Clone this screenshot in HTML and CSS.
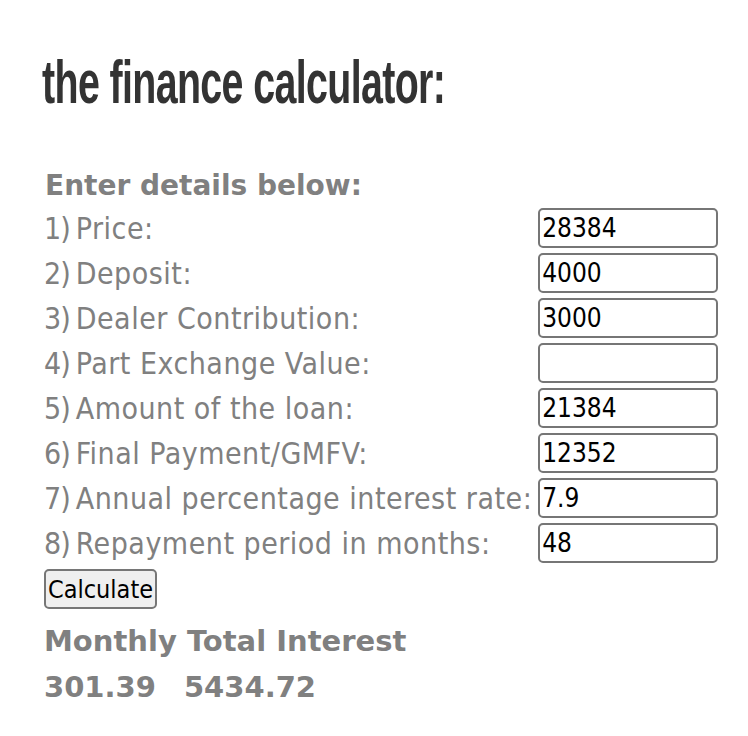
FILE: index.html
```html
<!DOCTYPE html>
<html lang="en">
<head>
  <meta charset="UTF-8">
  <meta name="viewport" content="width=device-width, initial-scale=1.0">
  <title>the finance calculator</title>
  <link rel="stylesheet" href="styles.css">
</head>
<body>
  <div class="container">
    <h1>the finance calculator:</h1>
    <p class="intro">Enter details below:</p>
    <form class="calc" onsubmit="return false">
      <span class="num">1)</span><label for="price">Price:</label><input type="text" id="price" value="28384">
      <span class="num">2)</span><label for="deposit">Deposit:</label><input type="text" id="deposit" value="4000">
      <span class="num">3)</span><label for="dealer">Dealer Contribution:</label><input type="text" id="dealer" value="3000">
      <span class="num">4)</span><label for="px">Part Exchange Value:</label><input type="text" id="px" value="">
      <span class="num">5)</span><label for="loan">Amount of the loan:</label><input type="text" id="loan" value="21384">
      <span class="num">6)</span><label for="final">Final Payment/GMFV:</label><input type="text" id="final" value="12352">
      <span class="num">7)</span><label for="rate">Annual percentage interest rate:</label><input type="text" id="rate" value="7.9">
      <span class="num">8)</span><label for="months">Repayment period in months:</label><input type="text" id="months" value="48">
    </form>
    <button class="calc-btn" type="button">Calculate</button>
    <div class="results">
      <div class="res-head">Monthly Total Interest</div>
      <div class="res-vals"><span class="monthly">301.39</span><span>5434.72</span></div>
    </div>
  </div>
</body>
</html>
```

FILE: styles.css
```css
body {
  margin: 0;
  padding: 0;
  background-color: #fff;
  font-family: 'DejaVu Sans', Verdana, sans-serif;
  color: #808080;
}
.container {
  padding: 46px 0 0 44px;
}
h1 {
  font-family: 'Liberation Sans', Arial, sans-serif;
  font-weight: bold;
  font-size: 62px;
  letter-spacing: -1px;
  line-height: 72px;
  color: #333;
  margin: 0 0 51px -2px;
  white-space: nowrap;
  transform: scaleX(0.635);
  transform-origin: left center;
}
.intro {
  font-weight: bold;
  font-size: 28px;
  line-height: 34px;
  margin: 0 0 5px 1px;
}
.calc {
  display: grid;
  grid-template-columns: auto auto 180px;
  column-gap: 6px;
  row-gap: 5px;
  align-items: center;
  font-family: 'DejaVu Sans Condensed', 'DejaVu Sans', sans-serif;
  font-stretch: condensed;
  font-size: 30px;
  letter-spacing: 0.5px;
  width: max-content;
}
.num {
  letter-spacing: -1px;
}
.calc input {
  box-sizing: border-box;
  height: 40px;
  width: 180px;
  border: 2px solid #767676;
  border-radius: 5px;
  padding: 0 2px;
  font-family: 'DejaVu Sans Condensed', 'DejaVu Sans', sans-serif;
  font-stretch: condensed;
  font-size: 26px;
  letter-spacing: 0;
  color: #000;
}
.calc-btn {
  margin-top: 6px;
  height: 40px;
  padding: 0 2px;
  border: 2px solid #767676;
  border-radius: 5px;
  background-color: #efefef;
  font-family: 'DejaVu Sans Condensed', 'DejaVu Sans', sans-serif;
  font-stretch: condensed;
  font-size: 25px;
  color: #000;
}
.results {
  font-weight: bold;
  font-size: 29px;
  line-height: 46px;
  margin-top: 9px;
}
.monthly {
  margin-right: 28px;
}
```
